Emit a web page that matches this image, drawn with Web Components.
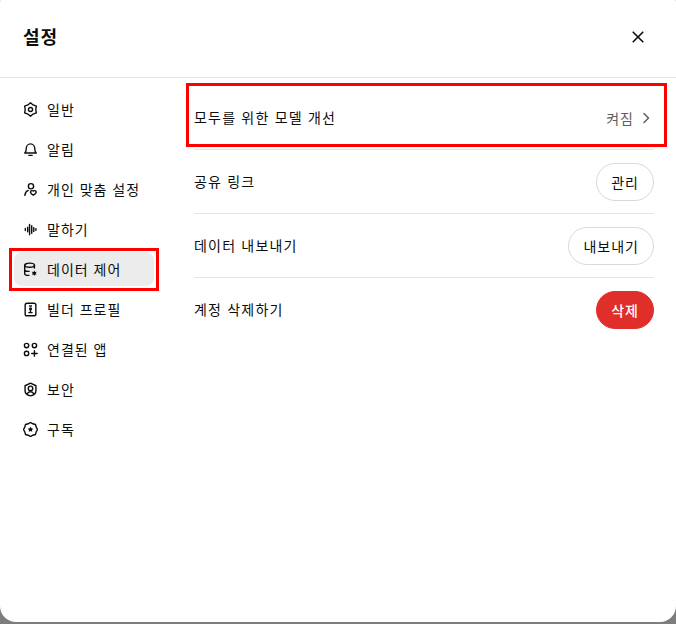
<!DOCTYPE html>
<html lang="ko">
<head>
<meta charset="utf-8">
<title>설정</title>
<style>
  html, body {
    margin: 0;
    height: 624px;
    overflow: hidden;
    background: #7d7d7d;
    font-family: "Noto Sans CJK KR", "Noto Sans", sans-serif;
    letter-spacing: 1px;
    color: #0d0d0d;
  }
</style>
</head>
<body>
<template id="nav-template">
  <style>
    :host {
      display: flex;
      align-items: center;
      gap: 9px;
      height: 34px;
      margin: 0 0 6px;
      padding: 0 9px;
      border-radius: 8px;
      font-size: 14px;
      color: #0d0d0d;
    }
    :host([active]) {
      background: #ececec;
    }
    svg {
      width: 15px;
      height: 15px;
      flex: none;
      fill: none;
      stroke: #0d0d0d;
      stroke-width: 1.5;
      stroke-linecap: round;
      stroke-linejoin: round;
    }
  </style>
  <svg viewBox="0 0 16 16"></svg>
  <slot></slot>
</template>

<template id="row-template">
  <style>
    :host {
      display: flex;
      align-items: center;
      justify-content: space-between;
      height: 63px;
      border-bottom: 1px solid #e5e5e5;
      font-size: 14px;
      color: #0d0d0d;
    }
    :host(:last-child) {
      border-bottom: 0;
    }
    .label {
      padding-bottom: 2px;
      letter-spacing: 1.2px;
    }
  </style>
  <div class="label"><slot></slot></div>
  <slot name="action"></slot>
</template>

<template id="button-template">
  <style>
    :host {
      display: inline-flex;
      align-items: center;
      justify-content: center;
      box-sizing: border-box;
      height: 38px;
      padding: 0 14px;
      border: 1px solid #d9d9d9;
      border-radius: 19px;
      background: #fff;
      font-size: 14px;
      color: #0d0d0d;
    }
    :host([danger]) {
      border-color: #e02e2a;
      background: #e02e2a;
      color: #fff;
      font-weight: 500;
    }
  </style>
  <slot></slot>
</template>

<template id="dialog-template">
  <style>
    :host {
      display: block;
      position: relative;
      box-sizing: border-box;
      height: 635px;
      margin-top: -13px;
      padding-top: 13px;
      border-radius: 16px;
      background: #fff;
    }
    header {
      display: flex;
      align-items: center;
      justify-content: space-between;
      box-sizing: border-box;
      height: 78px;
      padding: 0 30px 0 23px;
      border-bottom: 1px solid #e5e5e5;
    }
    h2 {
      margin: 0 0 5px;
      font-size: 18px;
      font-weight: 600;
      line-height: 24px;
    }
    .close {
      width: 16px;
      height: 16px;
      margin-bottom: 4px;
      fill: none;
      stroke: #0d0d0d;
      stroke-width: 1.6;
      stroke-linecap: round;
    }
    .body {
      display: flex;
    }
    nav {
      box-sizing: border-box;
      width: 168px;
      padding: 14px 14px 0;
      flex: none;
    }
    main {
      flex: 1;
      padding: 8px 22px 0 26px;
    }
    .mark {
      position: absolute;
      box-sizing: border-box;
      border: 3px solid #f00;
      pointer-events: none;
    }
    .mark.nav { left: 9px; top: 261px; width: 150px; height: 43px; }
    .mark.main { left: 186px; top: 96px; width: 481px; height: 64px; }
  </style>
  <header>
    <h2><slot name="title"></slot></h2>
    <svg class="close" viewBox="0 0 16 16"><path d="M3.2 3.2l9.6 9.6M12.8 3.2l-9.6 9.6"/></svg>
  </header>
  <div class="body">
    <nav><slot name="nav"></slot></nav>
    <main><slot></slot></main>
  </div>
  <div class="mark nav"></div>
  <div class="mark main"></div>
</template>

<settings-dialog>
  <span slot="title">설정</span>
  <nav-item slot="nav" icon="gear">일반</nav-item>
  <nav-item slot="nav" icon="bell">알림</nav-item>
  <nav-item slot="nav" icon="person">개인 맞춤 설정</nav-item>
  <nav-item slot="nav" icon="wave">말하기</nav-item>
  <nav-item slot="nav" icon="data" active>데이터 제어</nav-item>
  <nav-item slot="nav" icon="badge">빌더 프로필</nav-item>
  <nav-item slot="nav" icon="apps">연결된 앱</nav-item>
  <nav-item slot="nav" icon="shield">보안</nav-item>
  <nav-item slot="nav" icon="sub">구독</nav-item>

  <setting-row>
    모두를 위한 모델 개선
    <toggle-link slot="action">켜짐</toggle-link>
  </setting-row>
  <setting-row>공유 링크<pill-button slot="action">관리</pill-button></setting-row>
  <setting-row>데이터 내보내기<pill-button slot="action">내보내기</pill-button></setting-row>
  <setting-row>계정 삭제하기<pill-button slot="action" danger>삭제</pill-button></setting-row>
</settings-dialog>

<script>
  // bumpy circle outline, used by the gear and subscription icons
  function scallop(outer, inner, count, cx = 8, cy = 8) {
    let points = [];
    for (let i = 0; i < count * 2; i++) {
      const radius = i % 2 ? inner : outer;
      const angle = (Math.PI * i) / count - Math.PI / 2;
      points.push((cx + radius * Math.cos(angle)).toFixed(2) + " " + (cy + radius * Math.sin(angle)).toFixed(2));
    }
    return "M" + points.join("L") + "Z";
  }

  const ICONS = {
    gear: `<path d="${scallop(7.2, 5.6, 6)}"/><circle cx="8" cy="8" r="2.2"/>`,
    bell: '<path d="M1.800 11.800c1.300-.8 1.600-2 1.600-4.300C3.400 4.500 5.300 2 8 2s4.600 2.500 4.600 5.500c0 2.300.3 3.500 1.600 4.300z"/><path d="M6.300 14.300h3.400"/>',
    person: '<circle cx="8.500" cy="4.500" r="2.800"/><path d="M2 14.200c.3-2.700 1.700-4.500 3.600-5.200"/><path d="M11 9.700c.8-.9 2.700-.6 3 .8.200 1.400-1.500 2.600-3 3.500-1.500-.9-3.200-2.100-3-3.500.3-1.400 2.200-1.700 3-.8z"/>',
    wave: '<path d="M2.500 7v2M5 5.500v5M7 2.500v11M9.300 4v8M11.500 6v4M13.800 7.200v1.600"/>',
    data: `<ellipse cx="7" cy="3.400" rx="5.200" ry="2.200"/><path d="M1.800 3.400v9c0 1.100 1.800 1.800 4.500 1.900M12.200 3.400v3M1.800 8c0 1.100 2 2 4.700 2"/><path d="${scallop(3, 1.6, 6, 12, 12)}" fill="#0d0d0d" stroke="none"/>`,
    badge: '<rect x="2.300" y="1.300" width="11.400" height="13.400" rx="2"/><path d="M7 4.300h2"/><circle cx="8" cy="7.200" r=".9"/><path d="M8 8.300v2.800M6.300 11.300h3.400"/>',
    apps: '<circle cx="3.800" cy="3.800" r="2.300"/><circle cx="12.200" cy="3.800" r="2.300"/><circle cx="3.800" cy="12.200" r="2.300"/><path d="M12.200 9.300v5.800M9.300 12.200h5.800"/>',
    shield: '<path d="M8 1.200l5.800 2.800v5.300c0 2.800-2.700 4.800-5.800 5.500-3.100-.7-5.800-2.700-5.800-5.500V4z"/><circle cx="8" cy="6.800" r="2.400"/><path d="M4.800 12.200c.8-1.200 1.900-1.800 3.200-1.800s2.400.6 3.200 1.800"/>',
    sub: `<path d="${scallop(7.5, 6.600, 8)}"/><path d="${scallop(3, 1.700, 5)}" fill="#0d0d0d" stroke="none"/>`
  };

  class SettingsElement extends HTMLElement {
    constructor(templateId) {
      super();
      this.attachShadow({ mode: "open" });
      const template = document.getElementById(templateId);
      this.shadowRoot.appendChild(template.content.cloneNode(true));
    }
  }

  class SettingsDialog extends SettingsElement {
    constructor() {
      super("dialog-template");
    }
  }

  class NavItem extends SettingsElement {
    constructor() {
      super("nav-template");
    }

    connectedCallback() {
      this.shadowRoot.querySelector("svg").innerHTML = ICONS[this.getAttribute("icon")];
    }
  }

  class SettingRow extends SettingsElement {
    constructor() {
      super("row-template");
    }
  }

  class PillButton extends SettingsElement {
    constructor() {
      super("button-template");
    }
  }

  class ToggleLink extends HTMLElement {
    constructor() {
      super();
      this.attachShadow({ mode: "open" });
      this.shadowRoot.innerHTML = `
        <style>
          :host {
            display: inline-flex;
            align-items: center;
            gap: 6px;
            font-size: 14px;
            color: #5d5d5d;
          }
          svg {
            width: 14px;
            height: 14px;
            fill: none;
            stroke: #5d5d5d;
            stroke-width: 1.5;
            stroke-linecap: round;
            stroke-linejoin: round;
          }
        </style>
        <slot></slot>
        <svg viewBox="0 0 14 14"><path d="M4 2.500L8.500 7 4 11.500"/></svg>
      `;
    }
  }

  customElements.define("settings-dialog", SettingsDialog);
  customElements.define("nav-item", NavItem);
  customElements.define("setting-row", SettingRow);
  customElements.define("pill-button", PillButton);
  customElements.define("toggle-link", ToggleLink);
</script>
</body>
</html>
